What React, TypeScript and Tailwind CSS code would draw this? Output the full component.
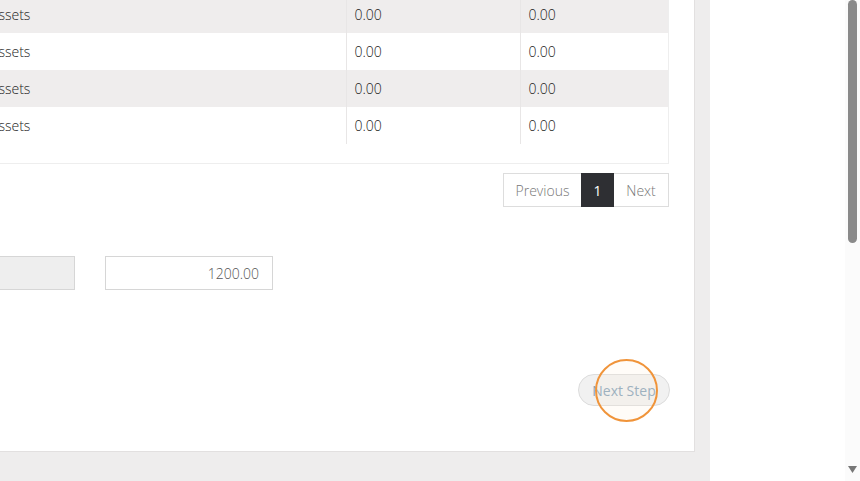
const rows = [
  { label: 'Assets', a: '0.00', b: '0.00' },
  { label: 'Assets', a: '0.00', b: '0.00' },
  { label: 'Assets', a: '0.00', b: '0.00' },
  { label: 'Assets', a: '0.00', b: '0.00' },
];

export default function App() {
  return (
    <div className="flex h-[481px] w-[860px] overflow-hidden bg-white font-['Open_Sans',sans-serif] text-[14px]">
      {/* main content column */}
      <div className="relative h-full w-[710px] shrink-0 overflow-hidden bg-[#eeeded]">
        <div className="-ml-[30px] -mt-[4px] h-[456px] w-[725px] border-r border-b border-[#e2e0e0] bg-white pl-[12px] pr-[26px]">
          {/* balances table */}
          <div className="w-[687px] border-x border-b border-[#eeeeee] pb-[19px]">
            <table className="w-full border-collapse table-fixed">
              <colgroup>
                <col className="w-[363px]" />
                <col className="w-[174px]" />
                <col className="w-[148px]" />
              </colgroup>
              <tbody>
                {rows.map((r, i) => (
                  <tr key={i} className={i % 2 === 0 ? 'h-[37px] bg-[#efeded]' : 'h-[37px] bg-white'}>
                    <td className="pl-[7px] font-light text-[#222222]">{r.label}</td>
                    <td className="border-l border-[#e8e6e6] px-2 font-light text-[#222222]">{r.a}</td>
                    <td className="border-l border-[#e8e6e6] px-2 font-light text-[#222222]">{r.b}</td>
                  </tr>
                ))}
              </tbody>
            </table>
          </div>

          {/* pagination */}
          <div className="mt-[9px] flex w-[687px] justify-end">
            <div className="flex h-[34px] items-stretch font-light text-[#777777]">
              <button className="w-[78px] border border-r-0 border-[#dddddd] bg-white">Previous</button>
              <button className="w-[33px] bg-[#2e2f33] font-normal text-white">1</button>
              <button className="w-[55px] border border-l-0 border-[#dddddd] bg-white">Next</button>
            </div>
          </div>

          {/* totals */}
          <div className="mt-[49px] flex items-center gap-[30px]">
            <div className="h-[34px] w-[93px] border border-[#d6d6d6] bg-[#eeeeee]" />
            <div className="flex h-[34px] w-[168px] items-center justify-end border border-[#d6d6d6] bg-white pr-[13px] font-light text-[#555555]">
              1200.00
            </div>
          </div>

          {/* step actions */}
          <div className="mt-[84px] flex w-[688px] justify-end">
            <button className="h-[32px] w-[92px] rounded-full border border-[#dcdcdc] bg-[#f1f1f1] text-[#86a2b8]">
              Next Step
            </button>
          </div>
        </div>

        {/* click highlight */}
        <div className="absolute left-[595px] top-[359px] h-[63px] w-[63px] rounded-full border-2 border-[#f0943a] bg-[#fff1dc]/20" />
      </div>

      {/* side area */}
      <div className="h-full w-[135px] shrink-0 bg-white" />

      {/* scrollbar */}
      <div className="relative h-full w-[15px] shrink-0 bg-[#fbfbfb]">
        <div className="absolute left-[3px] top-0 h-[243px] w-[9px] rounded-full bg-[#8a8a8a]" />
        <svg className="absolute left-[3px] top-[466px]" width="9" height="7" viewBox="0 0 9 7">
          <path d="M0 0 L9 0 L4.5 7 Z" fill="#777" />
        </svg>
      </div>
    </div>
  );
}
